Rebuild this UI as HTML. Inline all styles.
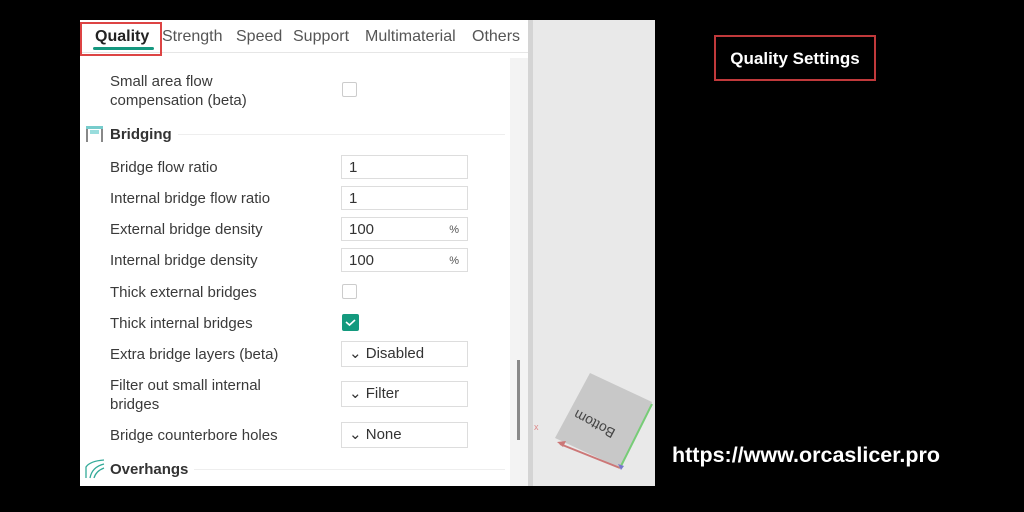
<!DOCTYPE html><html><head><style>
body{margin:0;width:1024px;height:512px;background:#000;position:relative;overflow:hidden;font-family:"Liberation Sans",sans-serif}
.a{position:absolute}
.p{left:80px;top:20px;width:448px;height:466px;background:#fff}
.lb{position:absolute;left:110px;font-size:15px;color:#3a3a3a;line-height:19px}
.in{position:absolute;left:341px;width:127px;height:24px;border:1px solid #ddd;background:#fff;font-size:15px;color:#333;line-height:24px;box-sizing:border-box;padding-left:7px}
.pc{position:absolute;right:8px;font-size:11px;color:#555}
.cb{position:absolute;left:342px;width:15px;height:15px;border:1px solid #ccc;border-radius:2px;box-sizing:border-box}
.tab{position:absolute;top:28px;font-size:16px;color:#555}
.h{position:absolute;left:110px;font-size:15px;font-weight:bold;color:#333;background:#fff;padding-right:6px;line-height:19px}
</style></head><body>
<div class="a p"></div>
<div class="a" style="left:528px;top:20px;width:5px;height:466px;background:#d4d4d4"></div>
<div class="a" style="left:533px;top:20px;width:122px;height:466px;background:#e9e9e9"></div>
<div class="a" style="left:80px;top:52px;width:448px;height:1px;background:#e6e6e6"></div>
<div class="a" style="left:510px;top:58px;width:18px;height:428px;background:#f3f3f3"></div>
<div class="a" style="left:517px;top:360px;width:3px;height:80px;background:#888"></div>
<div class="tab" style="left:95px;font-weight:bold;color:#222">Quality</div>
<div class="a" style="left:93px;top:47px;width:61px;height:3px;background:#15987f;border-radius:2px"></div>
<div class="a" style="left:80px;top:22px;width:82px;height:34px;border:2px solid #d44;box-sizing:border-box"></div>
<div class="tab" style="left:162px">Strength</div>
<div class="tab" style="left:236px">Speed</div>
<div class="tab" style="left:293px">Support</div>
<div class="tab" style="left:365px">Multimaterial</div>
<div class="tab" style="left:472px">Others</div>
<div class="lb" style="top:72px">Small area flow<br>compensation (beta)</div>
<div class="cb" style="top:82px"></div>
<div class="a" style="left:110px;top:134px;width:395px;height:1px;background:#eee"></div>
<svg class="a" style="left:85px;top:125px" width="20" height="18"><rect x="1" y="1" width="17" height="3" fill="#7cc"/><path d="M2 4V17M17 4V17" stroke="#888" stroke-width="2"/><rect x="5" y="5" width="9" height="4" fill="#9dd"/></svg>
<div class="h" style="top:125px">Bridging</div>
<div class="lb" style="top:158px">Bridge flow ratio</div><div class="in" style="top:155px">1</div>
<div class="lb" style="top:189px">Internal bridge flow ratio</div><div class="in" style="top:186px">1</div>
<div class="lb" style="top:220px">External bridge density</div><div class="in" style="top:217px">100<span class="pc">%</span></div>
<div class="lb" style="top:251px">Internal bridge density</div><div class="in" style="top:248px">100<span class="pc">%</span></div>
<div class="lb" style="top:283px">Thick external bridges</div><div class="cb" style="top:284px"></div>
<div class="lb" style="top:314px">Thick internal bridges</div>
<div class="cb" style="top:314px;width:17px;height:17px;background:#149a7e;border:none"><svg width="17" height="17"><path d="M4 8l3.5 3L13 6" stroke="#fff" stroke-width="1.6" fill="none"/></svg></div>
<div class="lb" style="top:345px">Extra bridge layers (beta)</div><div class="in" style="top:341px;height:26px">⌄ Disabled</div>
<div class="lb" style="top:376px">Filter out small internal<br>bridges</div><div class="in" style="top:381px;height:26px">⌄ Filter</div>
<div class="lb" style="top:426px">Bridge counterbore holes</div><div class="in" style="top:422px;height:26px">⌄ None</div>
<div class="a" style="left:110px;top:469px;width:395px;height:1px;background:#eee"></div>
<svg class="a" style="left:84px;top:459px" width="22" height="20"><path d="M2 19V8Q6 2 20 1M6 19Q8 8 20 5M10 19Q12 12 20 9" stroke="#3a9" stroke-width="1.3" fill="none"/></svg>
<div class="h" style="top:460px">Overhangs</div>
<svg class="a" style="left:530px;top:360px" width="125" height="126"><polygon points="60,13 122,42 90,108 25,78" fill="#c8c8c8"/><path d="M90 108L30 84" stroke="#c77" stroke-width="2"/><path d="M27 82l9 -1 -3 6z" fill="#c77"/><path d="M90 108L122 44" stroke="#7c7" stroke-width="2"/><text x="4" y="70" font-size="9" fill="#d88">x</text><text x="50" y="55" font-size="14" fill="#444" transform="rotate(208 70 58)">Bottom</text><path d="M88 104l6 2 -3 4z" fill="#77c"/></svg>
<div class="a" style="left:714px;top:35px;width:162px;height:46px;border:2px solid #c0393b;box-sizing:border-box;color:#fff;font-weight:bold;font-size:17px;line-height:44px;text-align:center">Quality Settings</div>
<div class="a" style="left:672px;top:443px;color:#fff;font-weight:bold;font-size:21.5px">https://www.orcaslicer.pro</div>
</body></html>
